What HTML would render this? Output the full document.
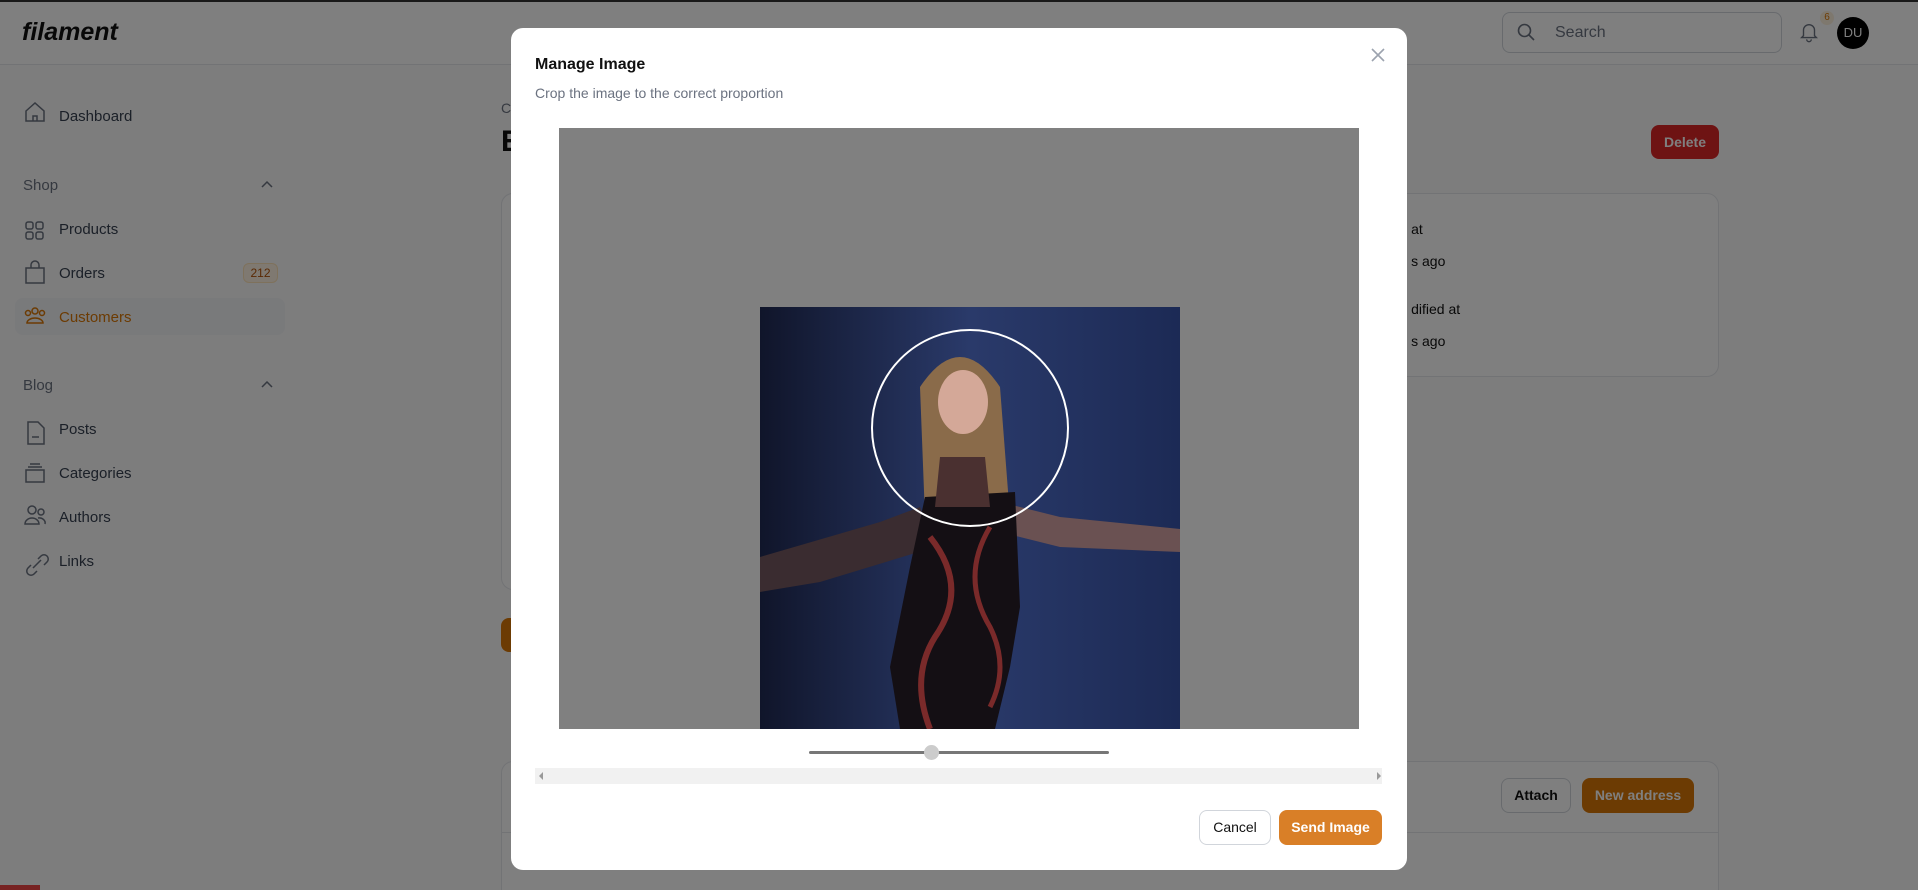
<!DOCTYPE html>
<html><head><meta charset="utf-8"><style>
*{box-sizing:border-box;margin:0;padding:0}
html,body{width:1918px;height:890px;overflow:hidden}
body{background:#fafafa;font-family:"Liberation Sans",sans-serif;position:relative;color:#111}
.abs{position:absolute}
.top{left:0;top:0;width:1918px;height:65px;background:#fff;border-bottom:1px solid #e5e7eb;border-top:2px solid #333}
.nav{font-size:15px;color:#374151}
.nav div{position:absolute;left:59px}
.overlay{left:0;top:0;width:1918px;height:890px;background:rgba(0,0,0,0.5)}
.modal{left:511px;top:28px;width:896px;height:842px;background:#fff;border-radius:12px}
</style></head><body>
<div class="abs top"></div>
<div class="abs" style="left:22px;top:18px;font-size:25px;font-weight:bold;font-style:italic;color:#111">filament</div>
<div class="abs" style="left:1502px;top:12px;width:280px;height:41px;border:1px solid #d1d5db;border-radius:8px"></div>
<svg class="abs" style="left:1516px;top:22px" width="20" height="20" viewBox="0 0 20 20" fill="none" stroke="#6b7280" stroke-width="1.6"><circle cx="8.5" cy="8.5" r="6"/><path d="M13 13l5 5"/></svg>
<div class="abs" style="left:1555px;top:24px;font-size:16px;color:#6b7280">Search</div>
<svg class="abs" style="left:1798px;top:21px" width="22" height="22" viewBox="0 0 24 24" fill="none" stroke="#6b7280" stroke-width="1.5"><path d="M6 16V10a6 6 0 0112 0v6l2 2H4z M9.5 20a2.5 2.5 0 005 0"/></svg>
<div class="abs" style="left:1820px;top:11px;width:14px;height:14px;border-radius:7px;background:#fdf0dc;color:#d97706;font-size:10px;text-align:center;line-height:14px">6</div>
<div class="abs" style="left:1837px;top:17px;width:32px;height:32px;border-radius:16px;background:#000;color:#fff;font-size:13px;text-align:center;line-height:32px">DU</div>

<div class="abs" style="left:15px;top:298px;width:270px;height:37px;background:#f3f4f6;border-radius:8px"></div>
<div class="nav">
<div style="top:108px">Dashboard</div>
<div style="top:177px;left:23px;color:#6b7280">Shop</div>
<div style="top:221px">Products</div>
<div style="top:265px">Orders</div>
<div style="top:309px;color:#d97706">Customers</div>
<div style="top:377px;left:23px;color:#6b7280">Blog</div>
<div style="top:421px">Posts</div>
<div style="top:465px">Categories</div>
<div style="top:509px">Authors</div>
<div style="top:553px">Links</div>
</div>
<div class="abs" style="left:243px;top:263px;width:35px;height:20px;border-radius:6px;background:#fef3e2;border:1px solid #fde3b8;color:#b45309;font-size:12px;text-align:center;line-height:18px">212</div>
<svg class="abs" style="left:0;top:0" width="300" height="600" fill="none" stroke="#6b7280" stroke-width="1.5">
<path d="M26 111l9-8 9 8v10H26z M33 121v-5h4v5"/>
<path d="M262 187l5-5 5 5 M262 387l5-5 5 5"/>
<rect x="26" y="222" width="7" height="7" rx="2"/><rect x="36" y="222" width="7" height="7" rx="2"/><rect x="26" y="232" width="7" height="7" rx="2"/><rect x="36" y="232" width="7" height="7" rx="2"/>
<path d="M26 268h18v15H26z M31 268v-3a4 4 0 018 0v3"/>
<g stroke="#d97706"><circle cx="35" cy="311" r="3"/><circle cx="28" cy="313" r="2.5"/><circle cx="42" cy="313" r="2.5"/><path d="M27 323a8 5 0 0116 0z"/></g>
<path d="M28 422h10l6 6v16H28z M32 437h7"/>
<path d="M26 470h18v12H26z M28 467h14 M30 464h10"/>
<circle cx="32" cy="510" r="4"/><circle cx="41" cy="512" r="3"/><path d="M25 524a7 6 0 0114 0z M38 518a6 5 0 017 6"/>
<path d="M31 565l-3 3a4 4 0 006 6l3-3 M38 559l3-3a4 4 0 016 6l-3 3 M33 568l8-8"/>
</svg>

<div class="abs" style="left:501px;top:100px;font-size:14px;color:#6b7280">C</div>
<div class="abs" style="left:501px;top:125px;font-size:30px;font-weight:bold">E</div>
<div class="abs" style="left:1651px;top:125px;width:68px;height:34px;border-radius:8px;background:#dc2626;color:#fff;font-size:14px;font-weight:bold;text-align:center;line-height:34px">Delete</div>
<div class="abs" style="left:501px;top:193px;width:1218px;height:184px;background:#fff;border:1px solid #e5e7eb;border-radius:12px"></div>
<div class="abs" style="left:501px;top:193px;width:600px;height:397px;background:#fff;border:1px solid #e5e7eb;border-radius:12px"></div>
<div class="abs" style="left:1380px;top:213px;font-size:14px;line-height:32px">&nbsp;&nbsp;&nbsp;&nbsp;&nbsp;&nbsp;&nbsp;&nbsp;at<br>&nbsp;&nbsp;&nbsp;&nbsp;&nbsp;&nbsp;&nbsp;&nbsp;s ago</div>
<div class="abs" style="left:1380px;top:293px;font-size:14px;line-height:32px">&nbsp;&nbsp;&nbsp;&nbsp;&nbsp;&nbsp;&nbsp;&nbsp;dified at<br>&nbsp;&nbsp;&nbsp;&nbsp;&nbsp;&nbsp;&nbsp;&nbsp;s ago</div>
<div class="abs" style="left:501px;top:618px;width:40px;height:34px;border-radius:8px;background:#d97706"></div>
<div class="abs" style="left:501px;top:761px;width:1218px;height:129px;background:#fff;border:1px solid #e5e7eb;border-bottom:0;border-radius:12px 12px 0 0"></div>
<div class="abs" style="left:501px;top:832px;width:1218px;height:1px;background:#e5e7eb"></div>
<div class="abs" style="left:1501px;top:778px;width:70px;height:35px;border-radius:8px;border:1px solid #d1d5db;font-size:14px;font-weight:bold;text-align:center;line-height:33px">Attach</div>
<div class="abs" style="left:1582px;top:778px;width:112px;height:35px;border-radius:8px;background:#d97706;color:#fff;font-size:14px;font-weight:bold;text-align:center;line-height:35px">New address</div>
<div class="abs" style="left:0;top:885px;width:40px;height:5px;background:#ef4444"></div>

<div class="abs overlay"></div>

<div class="abs modal">
<div class="abs" style="left:24px;top:28px;font-size:16px;font-weight:bold;color:#111">Manage Image</div>
<div class="abs" style="left:24px;top:57px;font-size:14px;color:#6b7280">Crop the image to the correct proportion</div>
<svg class="abs" style="left:859px;top:19px" width="16" height="16" stroke="#9ca3af" stroke-width="1.6"><path d="M2 2l12 12M14 2L2 14"/></svg>
<div class="abs" style="left:48px;top:100px;width:800px;height:601px;background:#808080"></div>
<svg class="abs" style="left:249px;top:279px" width="420" height="422" viewBox="0 0 420 422">
<defs><linearGradient id="bg" x1="0" x2="1"><stop offset="0" stop-color="#10152a"/><stop offset=".5" stop-color="#2a3a6a"/><stop offset="1" stop-color="#1c2a55"/></linearGradient></defs>
<rect width="420" height="422" fill="url(#bg)"/>
<path d="M0 250 L120 215 L160 200 L175 240 L60 275 L0 285Z" fill="#3a2c30"/>
<path d="M240 195 L300 210 L420 222 L420 245 L300 240 L240 225Z" fill="#6a5152"/>
<path d="M160 80 Q200 20 240 80 L250 210 L165 210Z" fill="#8a6b4a"/>
<ellipse cx="203" cy="95" rx="25" ry="32" fill="#d4a898"/>
<path d="M165 190 L255 185 L260 300 L250 360 L235 422 L140 422 L130 360 L150 260Z" fill="#140f14"/>
<path d="M180 150 L225 150 L230 200 L175 200Z" fill="#4a3030"/>
<path d="M170 230 Q210 280 175 330 Q150 370 170 422" stroke="#7a2a2a" stroke-width="6" fill="none"/>
<path d="M230 220 Q200 270 230 320 Q250 360 230 400" stroke="#7a2a2a" stroke-width="5" fill="none"/>
<circle cx="210" cy="121" r="98" fill="none" stroke="#fff" stroke-width="2"/>
</svg>
<div class="abs" style="left:298px;top:723px;width:300px;height:3px;background:#777;border-radius:2px"></div>
<div class="abs" style="left:413px;top:717px;width:15px;height:15px;background:#ccc;border-radius:8px"></div>
<div class="abs" style="left:24px;top:740px;width:847px;height:16px;background:#f1f1f1"></div>
<div class="abs" style="left:28px;top:744px;width:0;height:0;border:4px solid transparent;border-right-color:#999;border-left:0"></div>
<div class="abs" style="left:866px;top:744px;width:0;height:0;border:4px solid transparent;border-left-color:#999;border-right:0"></div>
<div class="abs" style="left:688px;top:782px;width:72px;height:35px;border-radius:8px;border:1px solid #d1d5db;font-size:14px;text-align:center;line-height:33px">Cancel</div>
<div class="abs" style="left:768px;top:782px;width:103px;height:35px;border-radius:8px;background:#d97f27;color:#fff;font-size:14px;font-weight:bold;text-align:center;line-height:35px">Send Image</div>
</div>
</body></html>
